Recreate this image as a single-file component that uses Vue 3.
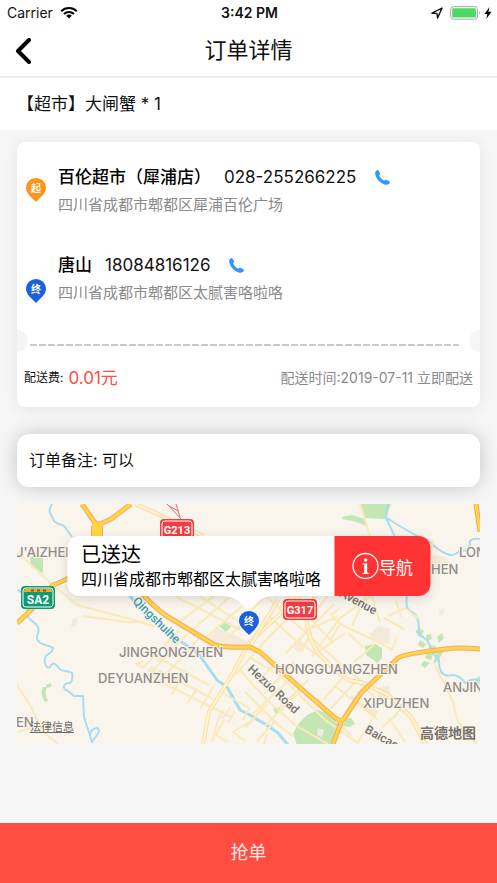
<template>
  <div class="page">
    <div class="status-bar">
      <div class="status-left">
        <span>Carrier</span>
        <svg class="wifi" viewBox="0 0 18 13">
          <path d="M1.2 5.2a11.2 11.2 0 0 1 15.6 0" />
          <path d="M4 8a7.2 7.2 0 0 1 10 0" />
          <path class="wifi-dot" d="M9 12.6 6.2 9.8a4 4 0 0 1 5.6 0z" />
        </svg>
      </div>
      <div class="status-time">3:42 PM</div>
      <div class="status-right">
        <svg class="location" viewBox="0 0 12 12">
          <path d="M1 6.2 11 1 6.6 11 5.9 6.4z" />
        </svg>
        <svg class="battery" viewBox="0 0 31 14">
          <rect class="battery-frame" x=".6" y=".6" width="27" height="12.6" rx="3" />
          <rect class="battery-level" x="2.2" y="2.2" width="23.8" height="9.4" rx="1.4" />
          <path class="battery-cap" d="M29 4.8q1.8 2.1 0 4.3z" />
        </svg>
        <svg class="bolt" viewBox="0 0 8 12">
          <path d="M5.6 0 .4 6.9h3L2.2 12l5.4-7.2H4.4z" />
        </svg>
      </div>
    </div>

    <header class="nav-bar">
      <button class="back-btn" type="button" aria-label="返回">
        <svg viewBox="0 0 16 26"><path d="M14 2 3 13l11 11" /></svg>
      </button>
      <h1 class="nav-title">订单详情</h1>
    </header>

    <div class="goods">{{ order.goods }}</div>

    <main class="content">
      <section class="order-card">
        <div
          v-for="stop in stops"
          :key="stop.type"
          class="stop"
          :class="'stop-' + stop.type"
        >
          <svg class="pin" viewBox="0 0 20 24">
            <path d="M10 24C6.500 20 0 16 0 9.800a10 9.800 0 0 1 20 0C20 16 13.500 20 10 24z" />
            <text x="10" y="13.500">{{ stop.mark }}</text>
          </svg>
          <div class="stop-info">
            <div class="stop-contact">
              <span class="stop-name">{{ stop.name }}</span>
              <span class="stop-phone">{{ stop.phone }}</span>
              <a class="call" :href="'tel:' + stop.phone" aria-label="拨打电话">
                <svg viewBox="0 0 15 15">
                  <path d="M.5 1.700C1 .2 3.300-.1 4 1.100l1 2.300c.3 1-.1 1.500-.9 2.100.9 2.200 2.900 4.300 5.300 5.300.7-.9 1.400-1.100 2.300-.8l2.300 1.100c1.100.6 1 1.900.1 2.700-1.100 1-2.700 1.200-4.600.6C5.200 13.100 1.200 8.900.3 4.600.1 3.500.1 2.600.5 1.700z" />
                </svg>
              </a>
            </div>
            <div class="stop-address">{{ stop.address }}</div>
          </div>
        </div>

        <div class="divider"><div class="dashes"></div></div>

        <div class="order-footer">
          <div class="fee">
            <span>配送费:</span>
            <span class="fee-value">{{ order.fee }}元</span>
          </div>
          <div class="time">配送时间:{{ order.time }}</div>
        </div>
      </section>

      <section class="remark">订单备注: {{ order.remark }}</section>

      <section class="map">
        <svg class="map-canvas" viewBox="0 0 463 240" preserveAspectRatio="xMidYMid slice">
          <!-- 绿地 -->
          <g class="park">
            <path d="M343 0l5 14 20 1 6-15z" />
            <path d="M325 13l10-2 13 4 1 7-7-3-6-2-11-2z" />
            <path d="M13 54l8-5 5 5v15l-4-2-8-4z" />
            <path d="M208 116l7 6-6 6-7-6z" />
            <path d="M348 142l10-2 7 4v10l-5 5-5-4-6-4z" />
            <path d="M276 229l6-10 8-8 11-5 8 3 8 8 7 4-6 14-2 6h-36z" />
            <path d="M329 213l5 1 4 6-5 3-7-1z" />
            <path d="M398 128l4-4 5 3-3 5zM409 131l5-1 1 5-5 2zM403 136l6 4-3 4-5-3zM412 141l7 1-1 5-6-1zM420 133l5-4 2 5-5 5zM410 149l6 1-2 6-6-2zM419 149l5-6 2 5-5 9-5 3zM407 157l6 2-5 5-4-3z" />
            <path d="M256 205l6-2 2 4-5 3z" />
            <path d="M29 181l4-2 2 3-5 2zM26 183q-4 7 2 15l3-1q-4-8-1-14z" />
            <path d="M458 175l5-3v14l-4-3z" />
          </g>
          <!-- 建筑区块 -->
          <g class="block">
            <path d="M200 124l18 7 14 8-4 4-28-3-8-6z" />
            <path d="M353 130l8-8 12 3-1 15-16-3z" />
            <path d="M277 137l6-3 5 7-6 7-5-3z" />
            <path d="M360 184l12-2 1 12-12 2z" />
            <path d="M416 51l12 2 8 9-8 8h-14z" />
            <path d="M134 162l6 3-4 6-6-4zM140 153l5 1-1 6-5-2z" />
            <path d="M349 207l7-5 6 6-7 5zM55 115l6-1-2 8-5 2z" />
            <path d="M301 224l6 2-2 7-5-2zM422 106l5-2v6l-4 2z" />
          </g>

          <!-- 河流 -->
          <g class="river">
            <path d="M35 0C30 9 34 8 37 17c5 5 8 2 11 6l7 10" />
            <path d="M0 86q10 4 10 14v11c2 6 9 7 11 12 2 8-2 7-1 12 4 8 12 5 16 9 0 6-7 5-8 10-1 5 1 11 5 9 3-6 6-3 9 1 4 5 9 2 13 5 1 4 0 8-2 10-6 0-8 4-4 7 6 2 7 8 10 6h7l1 21 8 25 5-7q4-5 0-7-7 1-7 8" />
            <path class="river-wide" d="M108 86l20 24 38 29 15 10 19 27 10 7 13 23 10 5 15 9 13 9 10 12" />
            <path d="M371 0l-2 14 9 19M370 14l11 7 17 10 13 5q9 10 19 14 8 3 13-4 7 3 10-6-2-6 10-5M390 91q-2 13 3 16 10 3 9 24 10 3 13 17l7 8q0 19 13 15 8 0 13 8 8-6 15-2" />
          </g>

          <!-- 支路 -->
          <g class="street">
            <path d="M0 48l36 33 24 20 50 13 40 12M66 112l44 6 16 0 10-6M0 181l13 20 13 27 15 12" />
            <path d="M158 92l66 34M182 92l45 29M173 128l41-36M188 134l44-38M161 119l40-30M206 137l31-27" />
            <path d="M118 159l8 5 36-38M126 177l44-47M143 177l42-46M119 161l7-4M134 150l58 31M128 170l86 43M141 166l55 29M155 190l8-14M170 200l10-15M183 205l13-22" />
            <path d="M206 189l26 15-6 12M219 170l16-18 15-17 31-31M213 204l-8 11M218 207l-7 12M207 216l-8 15 12 7M232 153l30 18 46 45 34 24M247 190l30-32M262 205l29-29M240 179l20-22" />
            <path d="M228 188l34 34 14 10M235 211l41-39M248 222l35-35M222 165l27 30 29 26 33 19M232 218l-16 10 12 9" />
            <path d="M232 109l17-17 39 36 38 34 22 18M262 104l29-28M281 101l35 38M268 150l49-50M290 116l36-41M250 111l32 28 27 17" />
            <path d="M295 152l28-38 33-23M288 127l32-14M295 128l-11 20M313 137l10-17-9-9 9-7M323 120l44 21 8 5 5-14M337 158l20-17M335 122l18-39M353 84l10 35M331 129l16 15M301 148l27-19" />
            <path d="M306 196l29-33M311 208l29-32M318 182l42 33M300 194l34 38M334 192l24 19-17 27M344 181l28 24" />
            <path d="M371 112l17-8 15 12M367 114l20 11M384 113l-5-16M343 0l10 32M416 36l-4 24M418 161l9 18 9 19 5 20 10 12 10 12M378 211l14-15M365 223l16-13" />
            <path d="M228 224l22-24M240 237l18-20M0 228l14-4M195 238l6-22 5-10M247 240l3-10M372 214l16 24" />
          </g>
          <path class="arterial-case" d="M282 92l-21 20-29 27-16 30-24 39-6 32" />
          <path class="arterial" d="M282 92l-21 20-29 27-16 30-24 39-6 32" />

          <!-- 次干道 -->
          <g class="road-case">
            <path d="M118 0l25 11 43 21M288 108l4 23 8 17 15 15 16 13 15 3 25 12 24 23 14 28M298 92l-7 17M232 144l29-48" />
          </g>
          <g class="road">
            <path d="M118 0l25 11 43 21M288 108l4 23 8 17 15 15 16 13 15 3 25 12 24 23 14 28M298 92l-7 17M232 144l29-48" />
          </g>
          <path class="railway" d="M150 0l16 17M159 0l4 13M152 2l9 5" />

          <!-- 主干道 -->
          <g class="highway-case">
            <path d="M65 0l11 16q3 5 7 4l11-5L114 0M80 22v28q-12 19-44 31Q20 102 0 119M81 48l45 43q10 11 22 20l48 29q7 4 37 3l10 5 45 40 30 26q7 5 10-1l16-24 20-19 17-16q4-4 48-9 12-2 35 0M325 216l-9 24M459 0l4 28" />
            <path class="junction" d="M80 22v28" />
          </g>
          <g class="highway">
            <path d="M65 0l11 16q3 5 7 4l11-5L114 0M80 22v28q-12 19-44 31Q20 102 0 119M81 48l45 43q10 11 22 20l48 29q7 4 37 3l10 5 45 40 30 26q7 5 10-1l16-24 20-19 17-16q4-4 48-9 12-2 35 0M325 216l-9 24M459 0l4 28" />
            <path class="junction" d="M80 20v30" />
          </g>

          <!-- 地名 -->
          <g class="place">
            <text v-for="place in places" :key="place.name" :x="place.x" :y="place.y">{{ place.name }}</text>
          </g>
          <text class="river-name" transform="translate(115 98) rotate(44)">Qingshuihe</text>
          <text class="road-name" transform="translate(230 166) rotate(43)">Hezuo Road</text>
          <text class="road-name" transform="translate(322 92) rotate(28)">Avenue</text>
          <text class="road-name" transform="translate(347 228) rotate(29)">Baicao Road</text>

          <!-- 道路编号 -->
          <g class="shield">
            <rect class="shield-outer" x="143" y="15" width="34" height="21" rx="4" />
            <rect class="shield-inner" x="145" y="17" width="30" height="17" rx="3" />
            <text x="160" y="30">G213</text>
            <rect class="shield-outer" x="266" y="95" width="34" height="21" rx="4" />
            <rect class="shield-inner" x="268" y="97" width="30" height="17" rx="3" />
            <text x="283" y="110">G317</text>
          </g>
          <g class="shield shield-green">
            <rect class="shield-outer" x="4" y="82" width="34" height="23" rx="4" />
            <rect class="shield-inner" x="6" y="84" width="30" height="19" rx="3" />
            <path class="shield-top" d="M7 88v-1q0-2 2-2h24q2 0 2 2v1z" />
            <path class="shield-dots" d="M14 86.500h3M20 86.500h3M26 86.500h3" />
            <text x="21" y="100">SA2</text>
          </g>
        </svg>

        <div class="callout">
          <div class="callout-text">
            <div class="callout-title">已送达</div>
            <div class="callout-address">{{ stops[1].address }}</div>
          </div>
          <button class="navigate-btn" type="button">
            <svg viewBox="0 0 28 28">
              <circle cx="14" cy="14" r="12.500" />
              <path d="M14.200 6.300a1.700 1.700 0 1 1 0 3.400 1.700 1.700 0 0 1 0-3.400zM10.800 11.600l4.900-.4v9c0 .7.500.9 1.900 1v.8h-6.900v-.8c1.500-.1 2-.3 2-1v-6.700c0-.8-.5-1-1.900-1.100z" />
            </svg>
            <span>导航</span>
          </button>
          <svg class="callout-tail" viewBox="0 0 50 15">
            <path d="M0 0h50C38 1 34 5 31 9l-4 4q-2 2-4 0l-4-4C16 5 12 1 0 0z" />
          </svg>
        </div>

        <svg class="pin map-pin" viewBox="0 0 20 24">
          <path d="M10 24C6.500 20 0 16 0 9.800a10 9.800 0 0 1 20 0C20 16 13.500 20 10 24z" />
          <text x="10" y="13.500">终</text>
        </svg>

        <a class="legal" href="#">法律信息</a>
        <span class="map-brand">高德地图</span>
      </section>
    </main>

    <button class="grab-btn" type="button">抢单</button>
  </div>
</template>

<script setup>
const order = {
  goods: '【超市】大闸蟹 * 1',
  fee: '0.01',
  time: '2019-07-11 立即配送',
  remark: '可以'
}

const stops = [
  {
    type: 'start',
    mark: '起',
    name: '百伦超市（犀浦店）',
    phone: '028-255266225',
    address: '四川省成都市郫都区犀浦百伦广场'
  },
  {
    type: 'end',
    mark: '终',
    name: '唐山',
    phone: '18084816126',
    address: '四川省成都市郫都区太腻害咯啦咯'
  }
]

const places = [
  { name: "U'AIZHEN", x: -3, y: 53 },
  { name: 'LONG', x: 442, y: 53 },
  { name: 'HEN', x: 414, y: 70 },
  { name: 'JINGRONGZHEN', x: 102, y: 153 },
  { name: 'DEYUANZHEN', x: 81, y: 179 },
  { name: 'HONGGUANGZHEN', x: 258, y: 170 },
  { name: 'XIPUZHEN', x: 346, y: 204 },
  { name: 'ANJING', x: 426, y: 188 },
  { name: 'EN', x: -1, y: 223 }
]
</script>

<style>
body {
  background: #f6f6f6;
}
</style>

<style scoped>
.page {
  display: flex;
  flex-direction: column;
  min-height: 100vh;
  background: #f6f6f6;
  color: #111;
  font-family: Inter, "Noto Sans CJK SC", sans-serif;
}

.page svg {
  display: block;
  flex-shrink: 0;
}

button {
  border: 0;
  padding: 0;
  font-family: inherit;
  cursor: pointer;
}

/* 状态栏 */
.status-bar {
  display: grid;
  grid-template-columns: 1fr auto 1fr;
  align-items: center;
  height: 25px;
  padding: 0 5px 0 7px;
  background: #fff;
  font-size: 14px;
  line-height: 25px;
}

.status-left,
.status-right {
  display: flex;
  align-items: center;
  gap: 7px;
}

.status-right {
  justify-content: flex-end;
}

.status-time {
  font-weight: 600;
}

.wifi {
  width: 18px;
  height: 13px;
  fill: none;
  stroke: #000;
  stroke-width: 2;
}

.wifi .wifi-dot {
  fill: #000;
  stroke: none;
}

.location {
  width: 12px;
  height: 12px;
  fill: none;
  stroke: #111;
  stroke-width: 1.4;
  stroke-linejoin: round;
}

.battery {
  width: 31px;
  height: 14px;
}

.battery-frame {
  fill: #fff;
  stroke: #a5a5a5;
}

.battery-level {
  fill: #4cd964;
}

.battery-cap {
  fill: #a5a5a5;
}

.bolt {
  width: 8px;
  height: 12px;
  margin-left: -4px;
}

/* 导航栏 */
.nav-bar {
  display: grid;
  grid-template-columns: 1fr auto 1fr;
  align-items: center;
  height: 51px;
  padding: 0 15px;
  background: #fff;
  border-bottom: 2px solid #ededed;
}

.back-btn {
  justify-self: start;
  background: none;
}

.back-btn svg {
  width: 16px;
  height: 26px;
  fill: none;
  stroke: #000;
  stroke-width: 4;
  stroke-linecap: round;
  stroke-linejoin: round;
}

.nav-title {
  margin: 0;
  padding-bottom: 2px;
  font-size: 22px;
  font-weight: 400;
  line-height: 30px;
}

.goods {
  padding: 0 17px;
  background: #fff;
  font-size: 17px;
  line-height: 52px;
}

.content {
  padding: 12px 17px 20px;
}

/* 订单卡片 */
.order-card {
  padding-top: 23px;
  padding-bottom: 3px;
  background: #fff;
  border-radius: 8px;
  box-shadow: 0 2px 16px rgba(0, 0, 0, 0.07);
}

.stop {
  display: flex;
  align-items: center;
  gap: 12px;
  padding-left: 9px;
}

.stop + .stop {
  margin-top: 38px;
}

.stop-end {
  align-items: flex-end;
}

.pin {
  width: 20px;
  height: 24px;
  fill: #1c60e0;
}

.pin text {
  fill: #fff;
  font-size: 10px;
  font-weight: 700;
  text-anchor: middle;
}

.stop-start .pin {
  fill: #ff9418;
}

.stop-info {
  display: flex;
  flex-direction: column;
  gap: 6px;
}

.stop-contact {
  display: flex;
  align-items: center;
  font-size: 17px;
  line-height: 24px;
}

.stop-name {
  margin-right: 13px;
  color: #000;
  font-weight: 500;
}

.stop-phone {
  margin-right: 19px;
}

.call svg {
  width: 15px;
  height: 15px;
  fill: #3396fb;
}

.stop-address {
  color: #8a8a8a;
  font-size: 15px;
  line-height: 20px;
}

.divider {
  display: flex;
  align-items: center;
  margin-top: 27px;
  overflow: hidden;
}

.divider::before,
.divider::after {
  flex-shrink: 0;
  width: 22px;
  height: 22px;
  margin: 0 -11px;
  background: #f5f5f5;
  border-radius: 50%;
  content: "";
}

.dashes {
  flex: 1;
  height: 2px;
  margin: 7px 21px 0 13px;
  background: repeating-linear-gradient(90deg, #c9c9c9 0 7px, transparent 7px 9px);
}

.order-footer {
  display: flex;
  align-items: center;
  justify-content: space-between;
  height: 52px;
  padding: 0 7px;
  line-height: 24px;
}

.fee {
  display: flex;
  align-items: center;
  gap: 5px;
  font-size: 12px;
}

.fee-value {
  color: #ff4d41;
  font-size: 17px;
}

.time {
  color: #8a8a8a;
  font-size: 14px;
}

.remark {
  margin-top: 27px;
  padding: 0 12px;
  background: #fff;
  border-radius: 12px;
  box-shadow: 0 0 20px rgba(0, 0, 0, 0.2);
  font-size: 16px;
  line-height: 53px;
}

/* 地图 */
.map {
  position: relative;
  margin-top: 17px;
  overflow: hidden;
  background: #f9f4ec;
}

.page .map-canvas {
  width: 100%;
  height: 240px;
  fill: none;
  stroke-linejoin: round;
}

.park {
  fill: #c4e6b5;
}

.block {
  fill: #f3eadc;
}

.river {
  stroke: #a9dcf0;
  stroke-width: 2;
}

.river-wide {
  stroke-width: 3;
}

.street {
  stroke: #faeabb;
  stroke-width: 2;
}

.arterial-case {
  stroke: #f8e0a2;
  stroke-width: 4;
}

.arterial {
  stroke: #fff6d0;
  stroke-width: 2;
}

.road-case {
  stroke: #f7c99a;
  stroke-width: 4;
}

.road {
  stroke: #fff3c4;
  stroke-width: 3;
}

.railway {
  stroke: #e26a6a;
  stroke-width: 1;
}

.highway-case {
  stroke: #f5a873;
  stroke-width: 5;
}

.highway {
  stroke: #ffd540;
  stroke-width: 3;
}

.highway-case .junction {
  stroke-width: 12;
}

.highway .junction {
  stroke-width: 10;
}

.place,
.river-name,
.road-name {
  stroke: #f9f4ec;
  stroke-width: 2;
  paint-order: stroke;
}

.place {
  fill: #908c86;
  font-size: 13px;
  font-weight: 500;
}

.river-name {
  fill: #3e9db5;
  font-family: Roboto, sans-serif;
  font-size: 12px;
  font-weight: 500;
}

.road-name {
  fill: #77736d;
  font-family: Roboto, sans-serif;
  font-size: 12px;
  font-weight: 500;
}

.shield text {
  fill: #fff;
  font-family: Roboto, sans-serif;
  font-size: 11px;
  font-weight: 700;
  text-anchor: middle;
}

.shield-outer {
  fill: #f43d42;
}

.shield-inner {
  fill: #f43d42;
  stroke: #fff;
  stroke-width: 1;
}

.shield-green .shield-outer,
.shield-green .shield-inner {
  fill: #0c9b73;
}

.shield-green text {
  font-size: 12px;
}

.shield-top {
  fill: #f7a81b;
}

.shield-dots {
  stroke: #8a5a10;
  stroke-width: 2;
}

.callout {
  position: absolute;
  top: 32px;
  left: 50%;
  display: flex;
  transform: translateX(-50%);
  border-radius: 12px;
  box-shadow: 0 3px 12px rgba(0, 0, 0, 0.12);
}

.callout-text {
  padding: 7px 13px 5px 14px;
  background: rgba(255, 255, 255, 0.98);
  border-radius: 12px 0 0 12px;
  color: #000;
  white-space: nowrap;
}

.callout-title {
  font-size: 20px;
  line-height: 25px;
}

.callout-address {
  font-size: 16px;
  line-height: 23px;
}

.navigate-btn {
  display: flex;
  align-items: center;
  justify-content: center;
  width: 96px;
  flex-shrink: 0;
  background: #ff3333;
  border-radius: 0 12px 12px 0;
  color: #fff;
  font-size: 17px;
}

.navigate-btn svg {
  width: 28px;
  height: 28px;
  fill: #fff;
}

.navigate-btn circle {
  fill: none;
  stroke: #fff;
  stroke-width: 1.3;
}

.callout-tail {
  position: absolute;
  top: 100%;
  left: 50%;
  width: 50px;
  height: 15px;
  transform: translateX(-50%);
  fill: #fff;
}

.map-pin {
  position: absolute;
  top: 107px;
  left: 50%;
  transform: translateX(-50%);
}

.legal {
  position: absolute;
  bottom: 9px;
  left: 13px;
  color: #6c6a66;
  font-size: 11px;
  line-height: 16px;
}

.map-brand {
  position: absolute;
  right: 4px;
  bottom: 1px;
  color: #77736d;
  font-size: 14px;
  font-weight: 700;
  line-height: 20px;
}

.grab-btn {
  margin-top: auto;
  background: #ff4d41;
  color: #ffe9e6;
  font-size: 18px;
  line-height: 60px;
}
</style>
